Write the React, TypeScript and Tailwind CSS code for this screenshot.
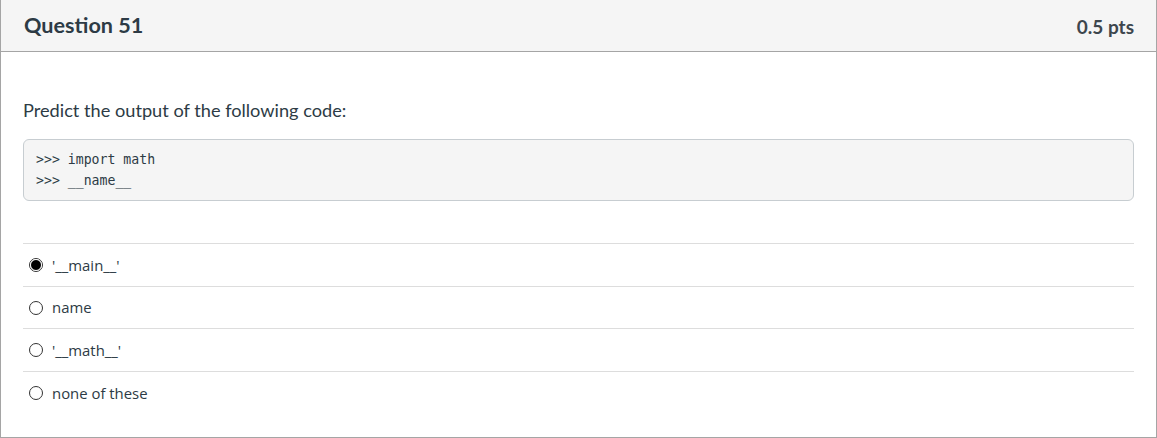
const options = [
  { label: "'__main__'", checked: true },
  { label: "name", checked: false },
  { label: "'__math__'", checked: false },
  { label: "none of these", checked: false },
];

const Radio: React.FC<{ checked: boolean }> = ({ checked }) => (
  <span className="flex h-[14px] w-[14px] shrink-0 items-center justify-center rounded-full border border-[#333] bg-white">
    {checked && <span className="h-[12px] w-[12px] rounded-full border border-white bg-black" />}
  </span>
);

export default function App() {
  return (
    <div className="h-[438px] w-[1157px] bg-white font-['Lato','Noto_Sans',sans-serif] text-[#2d3b45]">
      <div className="flex h-[438px] flex-col border-x border-b border-[#a5a5a5]">
        <header className="flex h-[52px] shrink-0 items-center justify-between border-b border-[#a5a5a5] bg-[#f5f5f5] pl-[23px] pr-[22px]">
          <h2 className="pt-[1px] text-[21.6px] font-bold leading-none">Question 51</h2>
          <span className="pt-[1px] text-[19px] font-bold leading-none text-[#3d464d]">0.5 pts</span>
        </header>

        <section className="flex flex-col px-[22px]">
          <p className="mt-[45px] text-[18.2px] leading-[26px]">Predict the output of the following code:</p>

          <pre className="mt-[16px] rounded-md border border-[#c7cdd1] bg-[#f5f5f5] px-3 py-[9px] font-['DejaVu_Sans_Mono','Liberation_Mono',monospace] text-[13.2px] leading-[21px] text-[#2d3b45]">
            {`>>> import math
>>> __name__`}
          </pre>

          <ul className="mt-[42px] flex flex-col font-['Open_Sans','Noto_Sans',sans-serif] text-[14.9px] text-[#2d3b45]">
            {options.map((o) => (
              <li key={o.label} className="flex h-[42.7px] items-center gap-[9px] border-t border-[#ddd] pl-[6px]">
                <Radio checked={o.checked} />
                <span>{o.label}</span>
              </li>
            ))}
          </ul>
        </section>
      </div>
    </div>
  );
}
